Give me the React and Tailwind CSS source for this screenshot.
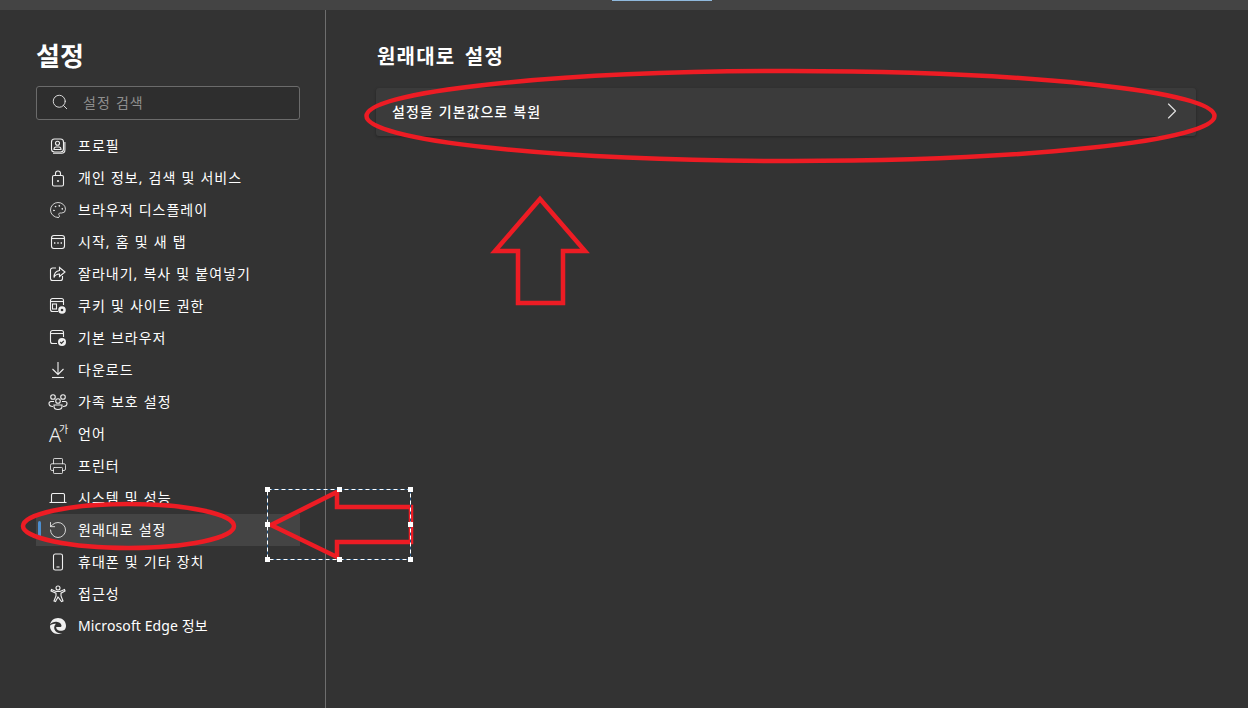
import React from 'react';
import { Search, ChevronRight, Palette, Printer, RotateCcw } from 'lucide-react';

const font = 'font-["Noto_Sans","Noto_Sans_CJK_KR",sans-serif]';
// Korean runs wider here than Noto's metrics, so every Hangul label gets this
const hangulSpacing = 'tracking-[1px] [word-spacing:0.5px]';

// --- Icons that the packages don't have ---
const ProfileIcon = () => (
    <svg width="16" height="16" viewBox="0 0 16 16" fill="none" stroke="currentColor" strokeWidth="1.1">
        <rect x="1.5" y="1" width="12" height="13" rx="3" />
        <path d="M3 15.2h8.5c2 0 3.4-1.2 3.4-3.2V4" />
        <circle cx="7.5" cy="5.2" r="2" />
        <path d="M4 11.5c0-1.5 1-2.5 2-2.5h3c1 0 2 1 2 2.5z" />
    </svg>
);

const LockIcon = () => (
    <svg width="14" height="17" viewBox="0 0 14 17" fill="none" stroke="currentColor" strokeWidth="1.1">
        <rect x="1.500" y="5.500" width="11" height="10.500" rx="1.500" />
        <path d="M4.500 5.500V3.500a2.500 2.500 0 0 1 5 0v2" />
        <circle cx="7" cy="11" r="1" fill="currentColor" stroke="none" />
    </svg>
);

const StartIcon = () => (
    <svg width="16" height="16" viewBox="0 0 16 16" fill="none" stroke="currentColor" strokeWidth="1.1">
        <rect x="1.5" y="1.5" width="13" height="13" rx="2.5" />
        <path d="M1.5 4.500h13" />
        <path d="M4 9h1.4M7.3 9h1.4M10.6 9H12" strokeWidth="1.5" />
    </svg>
);

const ShareBoxIcon = () => (
    <svg width="18" height="16" viewBox="0 0 18 16" fill="none" stroke="currentColor" strokeWidth="1.1">
        <path d="M7 2H3.500A2 2 0 0 0 1.500 4v8.500a2 2 0 0 0 2 2h8a2 2 0 0 0 2-2V10" />
        <path d="M10.500 1.500l5.500 4.500-5.500 4.500V8c-2.500 0-4.500 1-5.500 3.500 0-4 2-6.500 5.500-7z" />
    </svg>
);

const CookieIcon = () => (
    <svg width="18" height="18" viewBox="0 0 18 18" fill="none" stroke="currentColor" strokeWidth="1.1">
        <path d="M9 14.500H3.500a2 2 0 0 1-2-2v-9a2 2 0 0 1 2-2h9a2 2 0 0 1 2 2V8" />
        <path d="M1.500 4.500h13" />
        <rect x="3.500" y="7" width="4" height="5" />
        <circle cx="13" cy="13" r="3.800" fill="currentColor" stroke="none" />
        <circle cx="13" cy="13" r="1.300" fill="#333333" stroke="none" />
    </svg>
);

const DefaultBrowserIcon = () => (
    <svg width="18" height="18" viewBox="0 0 18 18" fill="none" stroke="currentColor" strokeWidth="1.1">
        <path d="M8 14.500H3.500a2 2 0 0 1-2-2v-9a2 2 0 0 1 2-2h9a2 2 0 0 1 2 2V8" />
        <path d="M1.500 4.500h13" />
        <circle cx="13" cy="13" r="4" fill="currentColor" stroke="none" />
        <path d="M11.200 13l1.300 1.300 2.300-2.500" stroke="#333333" strokeWidth="1.200" />
    </svg>
);

const DownloadIcon = () => (
    <svg width="16" height="18" viewBox="0 0 16 18" fill="none" stroke="currentColor" strokeWidth="1.1">
        <path d="M8 1v12M2.500 8L8 13.500 13.500 8" />
        <path d="M2 16.500h12" />
    </svg>
);

const FamilyIcon = () => (
    <svg width="20" height="18" viewBox="0 0 20 18" fill="none" stroke="currentColor" strokeWidth="1.1">
        <circle cx="5" cy="4" r="2.300" />
        <circle cx="15" cy="4" r="2.300" />
        <circle cx="10" cy="8" r="2.300" />
        <path d="M6 8.500H3a2 2 0 0 0-2 2c0 2 2 3 4 3" />
        <path d="M14 8.500h3a2 2 0 0 1 2 2c0 2-2 3-4 3" />
        <path d="M6 12h8v1.500c0 2-2 3-4 3s-4-1-4-3z" />
    </svg>
);

const LanguageIcon = () => (
    <svg width="22" height="24" viewBox="0 0 22 24" fill="currentColor">
        <text x="2" y="20" fontSize="20" fontWeight="300" fontFamily="Noto Sans">A</text>
        <text x="12" y="11" fontSize="10" fontFamily="Noto Sans CJK KR">가</text>
    </svg>
);

const LaptopIcon = () => (
    <svg width="18" height="10" viewBox="0 0 18 10" fill="none" stroke="currentColor" strokeWidth="1.1">
        <path d="M2.500 9V2A1.500 1.500 0 0 1 4 .5h10A1.500 1.500 0 0 1 15.500 2v7" />
        <path d="M.5 9.500h17" />
    </svg>
);

const PhoneIcon = () => (
    <svg width="12" height="18" viewBox="0 0 12 18" fill="none" stroke="currentColor" strokeWidth="1.1">
        <rect x="1.500" y="1" width="9" height="16" rx="1.800" />
        <path d="M4.500 14h3" />
    </svg>
);

const AccessibilityIcon = () => (
    <svg width="16" height="18" viewBox="0 0 16 18" fill="none" stroke="currentColor" strokeWidth="1.1">
        <circle cx="8" cy="3" r="2" />
        <path d="M1.500 4.500L6 6.500h4l4.500-2 .5 1.500-4 2.200v2.800l2 5-1.500.6L8 12l-2.500 4.600-1.500-.6 2-5V8.200L1 6z" />
    </svg>
);

const EdgeIcon = () => (
    <svg width="16" height="16" viewBox="0 0 16 16" fill="currentColor">
        <path d="M8 0C4 0 .8 2.800.1 6.500 1.500 4.500 4 3.500 6.500 3.700c2.500.2 5 1.800 5 4 0 .8-.6 1.300-1.500 1.300H6.200c-.2 2.300 2 3.700 4.500 3.700 1.600 0 3.200-.5 4.300-1.300-.1 0-.1.1-.1.1C16 9.800 16 8.800 16 7.800 16 3.300 12.500 0 8 0z" />
        <path d="M0 8c0 4.500 3.500 8 8 8 1.500 0 2.800-.4 4-1-3 .6-6.500-.6-7.500-3.500C3.800 9.500 4.300 7.200 6 5.800 3 5.500.5 6.500 0 8z" />
    </svg>
);

const navItems = [
    { label: '프로필', icon: <ProfileIcon /> },
    { label: '개인 정보, 검색 및 서비스', icon: <LockIcon /> },
    { label: '브라우저 디스플레이', icon: <Palette size={18} strokeWidth={1.1} /> },
    { label: '시작, 홈 및 새 탭', icon: <StartIcon /> },
    { label: '잘라내기, 복사 및 붙여넣기', icon: <ShareBoxIcon /> },
    { label: '쿠키 및 사이트 권한', icon: <CookieIcon /> },
    { label: '기본 브라우저', icon: <DefaultBrowserIcon /> },
    { label: '다운로드', icon: <DownloadIcon /> },
    { label: '가족 보호 설정', icon: <FamilyIcon /> },
    { label: '언어', icon: <LanguageIcon /> },
    { label: '프린터', icon: <Printer size={18} strokeWidth={1.1} /> },
    { label: '시스템 및 성능', icon: <LaptopIcon />, clipped: true },
    { label: '원래대로 설정', icon: <RotateCcw size={20} strokeWidth={1} />, active: true },
    { label: '휴대폰 및 기타 장치', icon: <PhoneIcon /> },
    { label: '접근성', icon: <AccessibilityIcon /> },
    { label: 'Microsoft Edge 정보', icon: <EdgeIcon />, latin: true },
];

const NavItem = ({ item }) => (
    <div className={`relative h-8 ${item.active ? 'bg-[#444444]' : ''}`}>
        {item.active && <span className="absolute left-[2px] top-[7px] h-[18px] w-[3px] rounded-sm bg-[#4c8fd0]" />}
        <div className={`flex w-full items-start ${item.clipped ? 'h-[21px] overflow-hidden' : 'h-8'}`}>
            <div className="flex h-8 w-[42px] shrink-0 items-center justify-center pl-[2px] text-[#f0f0f0]">{item.icon}</div>
            <span className={`text-[14px] leading-8 text-white ${item.latin ? 'tracking-[0.1px]' : hangulSpacing}`}>{item.label}</span>
        </div>
    </div>
);

// --- Red marks that were painted over the screenshot ---
const Annotations = () => (
    <svg className="pointer-events-none absolute inset-0" width="1248" height="708" fill="none">
        <g stroke="#ed1c24" strokeWidth="4.5">
            <ellipse cx="790.500" cy="116" rx="424" ry="45" />
            <ellipse cx="128.500" cy="526" rx="105.500" ry="22" />
            <path d="M540 199L495 251H518V303H563V251H585Z" />
            <path d="M271 525L337 492V507H411V542H337V557Z" />
        </g>
        <rect x="267.500" y="489.500" width="143" height="70" stroke="#1f4e79" />
        <rect x="267.500" y="489.500" width="143" height="70" stroke="#ffffff" strokeDasharray="4 3" />
        <g fill="#ffffff">
            <rect x="265" y="487" width="5" height="5" />
            <rect x="337" y="487" width="5" height="5" />
            <rect x="408" y="487" width="5" height="5" />
            <rect x="265" y="522" width="5" height="5" />
            <rect x="408" y="522" width="5" height="5" />
            <rect x="265" y="557" width="5" height="5" />
            <rect x="337" y="557" width="5" height="5" />
            <rect x="408" y="557" width="5" height="5" />
        </g>
    </svg>
);

const App = () => {
    return (
        <div className={`relative flex h-[708px] w-[1248px] flex-col overflow-hidden bg-[#333333] ${font}`}>
            <div className="h-[10px] shrink-0 bg-[#444444] pl-[612px]">
                <div className="h-px w-[100px] bg-[#8fb8dc]" />
            </div>
            <div className="flex min-h-0 flex-1">
                <aside className="w-[326px] shrink-0 border-r border-[#6e6e6e] pl-9 pr-[25px] pt-[27px]">
                    <h1 className="h-[49px] text-[26px] leading-[38px] font-bold text-white">설정</h1>
                    <div className="flex h-[34px] items-center rounded-[3px] border border-[#6b6b6b] bg-[#2e2e2e] pl-[14px] pb-[2px]">
                        <Search size={18} strokeWidth={1.25} className="text-[#e0e0e0]" />
                        <span className={`ml-[14px] text-[14px] text-[#8f8f8f] ${hangulSpacing}`}>설정 검색</span>
                    </div>
                    <nav className="mt-[10px]">
                        {navItems.map((item) => <NavItem key={item.label} item={item} />)}
                    </nav>
                </aside>
                <main className="flex-1 pl-[51px] pr-[52px] pt-[32px]">
                    <h2 className="h-[46px] text-[20px] leading-[30px] font-bold tracking-[1.2px] text-white [word-spacing:3px]">원래대로 설정</h2>
                    <div className="-ml-px flex h-12 items-center justify-between rounded-[3px] bg-[#3b3b3b] pb-[2px] pl-[16px] pr-[10px] shadow-[0_1px_3px_rgba(0,0,0,0.3)]">
                        <span className={`text-[14px] font-medium text-white ${hangulSpacing}`}>설정을 기본값으로 복원</span>
                        <ChevronRight size={28} strokeWidth={1} className="text-[#e0e0e0]" />
                    </div>
                </main>
            </div>
            <Annotations />
        </div>
    );
};

export default App;
